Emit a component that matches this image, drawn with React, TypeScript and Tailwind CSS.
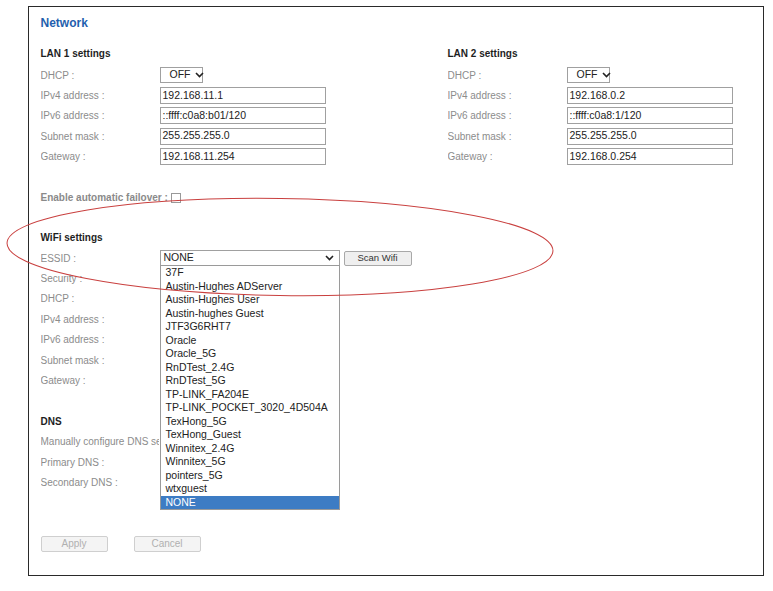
import React from "react";

const font = { fontFamily: '"Liberation Sans", Arial, sans-serif' };

const lan1 = [
  ["IPv4 address :", "192.168.11.1"],
  ["IPv6 address :", "::ffff:c0a8:b01/120"],
  ["Subnet mask :", "255.255.255.0"],
  ["Gateway :", "192.168.11.254"],
];

const lan2 = [
  ["IPv4 address :", "192.168.0.2"],
  ["IPv6 address :", "::ffff:c0a8:1/120"],
  ["Subnet mask :", "255.255.255.0"],
  ["Gateway :", "192.168.0.254"],
];

const networks = [
  "37F",
  "Austin-Hughes ADServer",
  "Austin-Hughes User",
  "Austin-hughes Guest",
  "JTF3G6RHT7",
  "Oracle",
  "Oracle_5G",
  "RnDTest_2.4G",
  "RnDTest_5G",
  "TP-LINK_FA204E",
  "TP-LINK_POCKET_3020_4D504A",
  "TexHong_5G",
  "TexHong_Guest",
  "Winnitex_2.4G",
  "Winnitex_5G",
  "pointers_5G",
  "wtxguest",
  "NONE",
];

function Chevron() {
  return (
    <svg width="9" height="6" viewBox="0 0 9 6" className="shrink-0">
      <path d="M1 1 L4.5 4.5 L8 1" fill="none" stroke="#222" strokeWidth="1.6" />
    </svg>
  );
}

function Label({ children }: { children: React.ReactNode }) {
  return (
    <div className="w-[119px] shrink-0 pr-[1px]">
      <div className="overflow-hidden whitespace-nowrap text-[10px] text-[#8c8c8c]">{children}</div>
    </div>
  );
}

function Heading({ children, className = "" }: { children: React.ReactNode; className?: string }) {
  return <div className={`h-[14px] text-[10px] font-bold leading-[14px] text-[#1e1e1e] ${className}`}>{children}</div>;
}

function DhcpSelect() {
  return (
    <div className="flex h-[16px] w-[43px] items-center gap-[4px] border border-[#a0a0a0] bg-white pl-[9px] text-[10.5px] text-[#222]">
      OFF <Chevron />
    </div>
  );
}

function TextBox({ value }: { value: string }) {
  return (
    <div className="flex h-[17px] w-[166px] items-center border border-[#a0a0a0] bg-white pl-[2px] text-[10.5px] text-[#222]">
      {value}
    </div>
  );
}

function LanBlock({ title, rows }: { title: string; rows: string[][] }) {
  return (
    <div>
      <Heading>{title}</Heading>
      <div className="mt-[4px]">
        <div className="flex h-[20.4px] items-center">
          <Label>DHCP :</Label>
          <DhcpSelect />
        </div>
        {rows.map(([label, value]) => (
          <div key={label} className="flex h-[20.4px] items-center">
            <Label>{label}</Label>
            <TextBox value={value} />
          </div>
        ))}
      </div>
    </div>
  );
}

function Button({ children }: { children: React.ReactNode }) {
  return (
    <div className="flex h-[16px] w-[67px] items-center justify-center rounded-[2px] border border-[#cfcfcf] bg-[#f4f4f4] text-[10px] text-[#b0b0b0]">
      {children}
    </div>
  );
}

export default function App() {
  return (
    <div className="relative h-[591px] w-[773px] bg-white" style={font}>
      <div className="ml-[28px] mt-[6px] h-[570px] w-[736px] border-[1.5px] border-[#2a2a2a] px-[11.5px] pt-[9px]">
        <div className="h-[14px] text-[12px] font-bold leading-[14px] text-[#1f5fae]">Network</div>

        <div className="mt-[17px] grid grid-cols-[407px_1fr]">
          <LanBlock title="LAN 1 settings" rows={lan1} />
          <LanBlock title="LAN 2 settings" rows={lan2} />
        </div>

        <div className="mt-[21px] flex h-[20px] items-center gap-[3px] text-[10px] font-bold text-[#8a8a8a]">
          Enable automatic failover :
          <span className="h-[10px] w-[10px] border border-[#999] bg-white" />
        </div>

        <Heading className="mt-[23px]">WiFi settings</Heading>
        <div className="mt-[3px]">
          <div className="flex h-[20.4px] items-center">
            <Label>ESSID :</Label>
            <div className="relative">
              <div className="flex h-[16px] w-[180px] items-center justify-between border border-[#a0a0a0] bg-white pl-[3px] pr-[5px] text-[10.5px] text-[#222]">
                NONE <Chevron />
              </div>
              <div className="absolute left-0 top-[15px] z-10 w-[180px] border border-[#9a9a9a] bg-white">
                {networks.map((n) => (
                  <div
                    key={n}
                    className={`flex h-[13.5px] items-center pl-[5px] text-[10.5px] ${
                      n === "NONE" ? "bg-[#3d7cc4] text-white" : "text-[#222]"
                    }`}
                  >
                    {n}
                  </div>
                ))}
              </div>
            </div>
            <div className="ml-[4px] flex h-[15px] w-[68px] items-center justify-center rounded-[2px] border border-[#a8a8a8] bg-[#efefef] text-[9.5px] text-[#333]">
              Scan Wifi
            </div>
          </div>
          {["Security :", "DHCP :", "IPv4 address :", "IPv6 address :", "Subnet mask :", "Gateway :"].map((l) => (
            <div key={l} className="flex h-[20.4px] items-center">
              <Label>{l}</Label>
            </div>
          ))}
        </div>

        <Heading className="mt-[24px]">DNS</Heading>
        <div className="mt-[3px]">
          {["Manually configure DNS server :", "Primary DNS :", "Secondary DNS :"].map((l) => (
            <div key={l} className="flex h-[20.4px] items-center">
              <Label>{l}</Label>
            </div>
          ))}
        </div>

        <div className="mt-[43px] flex gap-[26px]">
          <Button>Apply</Button>
          <Button>Cancel</Button>
        </div>
      </div>

      <svg className="pointer-events-none absolute left-0 top-0 z-20" width="773" height="591" viewBox="0 0 773 591">
        <ellipse
          cx="280"
          cy="241"
          rx="273"
          ry="48.5"
          fill="none"
          stroke="#c9403f"
          strokeWidth="1"
          transform="rotate(0.8 280 241)"
        />
      </svg>
    </div>
  );
}
